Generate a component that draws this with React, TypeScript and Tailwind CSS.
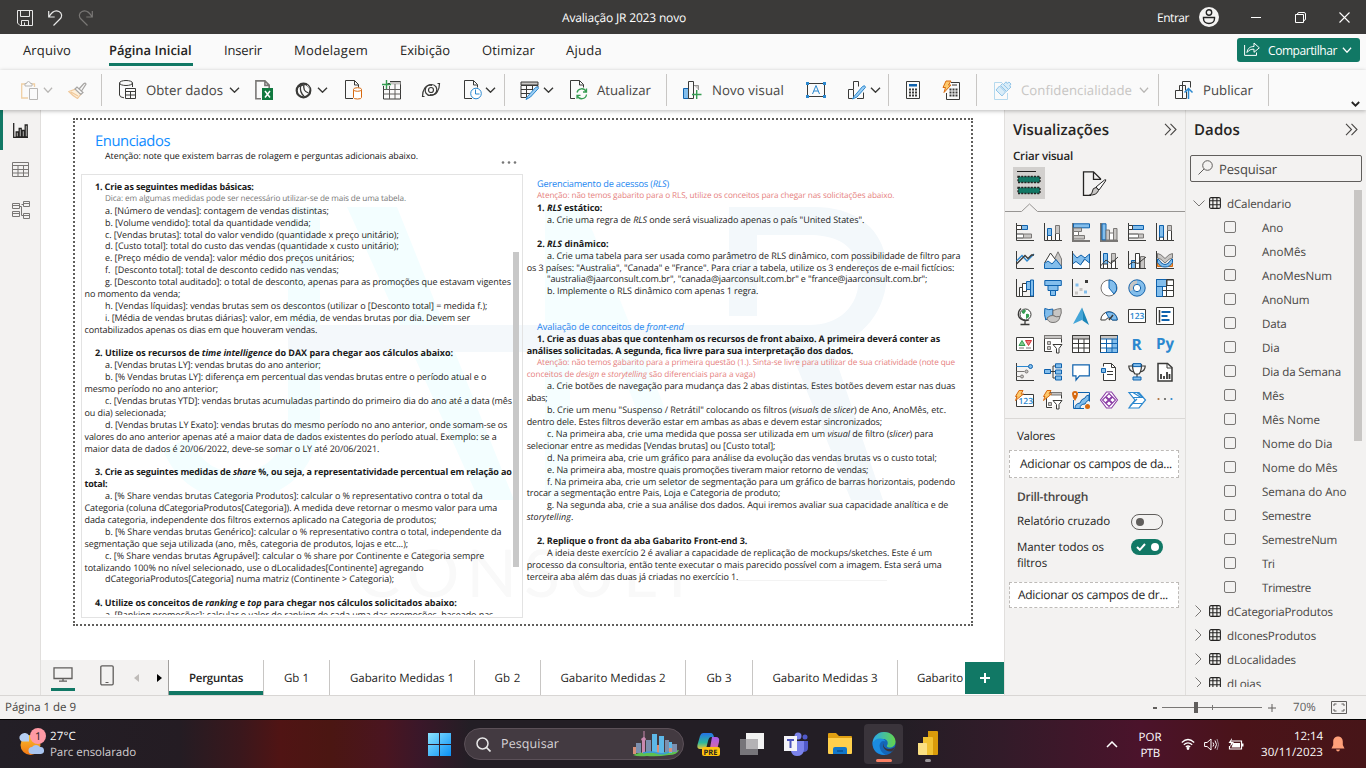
import React, { useLayoutEffect, useRef, useState } from 'react';

const DK = '#3a3a38';
const BL = '#0f62ad';
const LB = '#83beec';
const GY = '#797775';
const LG = '#c8c6c4';

/* Text whose letter spacing is adjusted so that it spans a given width. */
function Fit({ w, className = '', children }: { w: number; className?: string; children: React.ReactNode }) {
  const ref = useRef<HTMLSpanElement>(null);
  const [ls, setLs] = useState(0);
  useLayoutEffect(() => {
    const el = ref.current;
    if (!el) return;
    el.style.letterSpacing = '0px';
    const n = (el.textContent || '').length || 1;
    const next = (w - el.getBoundingClientRect().width) / n;
    setLs(next);
    el.style.letterSpacing = next + 'px';
  }, [w]);
  return (
    <span ref={ref} style={{ letterSpacing: ls + 'px' }} className={'inline-block shrink-0 whitespace-pre ' + className}>
      {children}
    </span>
  );
}

function I({ s = 18, h, v, className = '', children }: { s?: number; h?: number; v?: string; className?: string; children: React.ReactNode }) {
  return (
    <svg width={s} height={h ?? s} viewBox={v ?? `0 0 ${s} ${h ?? s}`} fill="none" stroke={DK} strokeWidth="1" className={'shrink-0 ' + className}>
      {children}
    </svg>
  );
}

const Chev = ({ className = '', c = '#3a3a38', s = 11 }: { className?: string; c?: string; s?: number }) => (
  <svg width={s} height="6" viewBox="0 0 11 6" fill="none" stroke={c} strokeWidth="1.4" preserveAspectRatio="none" className={'shrink-0 ' + className}>
    <path d="M1 .7 5.500 5.200 10 .7" />
  </svg>
);
const Sep = ({ className = '' }: { className?: string }) => <div className={'h-8 w-px shrink-0 bg-[#c8c6c4] ' + className} />;

function TitleBar() {
  return (
    <header className="flex h-[34px] shrink-0 items-center bg-[#3b3a39] text-[12px] text-white">
      <I s={16} className="ml-[17px] mt-[2px]"><g stroke="#e8e8e8" ><path d="M.5.5h15v15H3l-2.500-2.500zM3.500.5v6h9v-6M4.500 15.500v-5h7v5M7.500 12.500v3" /></g></I>
      <I s={15} h={16} className="ml-[15px] mt-[1px]"><path d="M.7 1v6h6M1 6.800C4 1.500 8 .2 11 1.500s3.500 5 1 7.500L5.500 15.500" stroke="#e8e8e8" strokeWidth="1.2" /></I>
      <I s={15} h={16} className="ml-[15px] mt-[1px]"><path d="M14.300 1v6h-6M14 6.800C11 1.500 7 .2 4 1.500s-3.500 5-1 7.500L9.500 15.500" stroke="#797775" strokeWidth="1.2" /></I>
      <Fit w={124} className="ml-[469px] mt-[2px]">Avaliação JR 2023 novo</Fit>
      <Fit w={32} className="ml-[471px] mt-[2px]">Entrar</Fit>
      <I s={20} className="ml-[10px]"><circle cx="10" cy="10" r="10" fill="#f3f2f1" stroke="none" /><circle cx="10" cy="5.500" r="2.700" stroke="#222" strokeWidth="1.400" /><path d="M4.500 10.500h11v1.200c0 3-2.500 4.800-5.500 4.800s-5.500-1.800-5.500-4.800z" stroke="#222" strokeWidth="1.400" /></I>
      <div className="ml-8 h-px w-[10px] bg-white" />
      <I s={11} className="ml-[34px] mt-[1px]"><path d="M.5 2.500h8v8h-8zM2.500 2.500V2Q2.500.5 4 .5h5Q10.500.5 10.500 2v5q0 1.500-2 1.500" stroke="#fff" /></I>
      <I s={11} className="ml-[33px] mt-[1px]"><path d="M.5.5l10 10M10.500.5l-10 10" stroke="#fff" strokeWidth="1.100" /></I>
    </header>
  );
}

function Menu() {
  return (
    <nav className="flex h-9 shrink-0 items-center bg-[#fafafa] text-[13px] text-[#252423]">
      <Fit w={48} className="ml-[23px] -mt-[2px]">Arquivo</Fit>
      <div className="ml-[38px] flex h-7 w-[84px] flex-col justify-between border-b-[3px] border-[#117865] pt-[2px] font-semibold leading-5"><Fit w={84}>Página Inicial</Fit></div>
      <Fit w={38} className="ml-[31px] -mt-[2px]">Inserir</Fit>
      <Fit w={74} className="ml-[32px] -mt-[2px]">Modelagem</Fit>
      <Fit w={50} className="ml-[32px] -mt-[2px]">Exibição</Fit>
      <Fit w={53} className="ml-[32px] -mt-[2px]">Otimizar</Fit>
      <Fit w={36} className="ml-[31px] -mt-[2px]">Ajuda</Fit>
      <button className="-mt-1 ml-[635px] flex h-6 w-[123px] items-center rounded-[3px] bg-[#117865] text-[12px] font-medium text-white">
        <I s={16} h={14} className="ml-[7px] -mt-[2px]"><path d="M.6 3v10.400h11.900V10.500M3 10.500C3.500 6 6.500 4.500 10 4.500V1l5.300 4.800L10 10.300V7.200C7 7 5 8 3 10.500z" stroke="#fff" /></I>
        <Fit w={69} className="ml-[8px] mt-[2px]">Compartilhar</Fit>
        <Chev c="#fff" s={10} className="ml-[5px]" />
      </button>
    </nav>
  );
}

function Ribbon() {
  return (
    <div className="relative z-10 flex h-10 shrink-0 items-center bg-[#fafafa] text-[13.200px] text-[#484644] shadow-[0_1px_4px_rgba(0,0,0,0.28)]">
      <I s={17} h={19} className="ml-[21px]"><path d="M7 17H.7V3h4M10 3h3.500v3" stroke="#f0cfa4" strokeWidth="1.300" /><path d="M4 5V2.500h1.500q.5-2 2-2t2 2H11V5z M8.500 7.500h8v11h-8z" stroke="#b8b6b4" fill="#fafafa" /></I>
      <Chev c="#b8b6b4" s={10} className="ml-[5px]" />
      <I s={19} h={17} className="ml-[15px]"><path d="M.8 9.500 8 7l5 5-3.500 4.500C7 15 4 13 .8 9.500zM3 10l7 4" stroke="#f0c89a" fill="#fdf0dc" strokeWidth="1.200" /><path d="M7 7l2-2 6 5.500-2.200 2zM11 7l4.500-5q2-2 2.500.2L13.500 9" stroke="#a8a6a4" fill="#fafafa" strokeWidth="1.200" /></I>
      <Sep className="ml-[14px]" />
      <I s={17} h={20} className="ml-[17px]"><ellipse cx="7" cy="3" rx="6.500" ry="2.500" /><path d="M.5 3v12q0 2.300 4.500 2.800M13.500 3v4M6.500 8.500h10v10h-10zM6.500 11.500h10M6.500 15h10M11.500 11.500v7" /></I>
      <Fit w={77} className="ml-[10px] mt-[2px]">Obter dados</Fit>
      <Chev className="ml-[6px]" />
      <I s={18} h={20} className="ml-[15px]"><path d="M6 18.800H.9V.9h9l4.300 4.300v3M9.900.9v4.500h4.300" stroke="#797775" strokeWidth="1.600" fill="#fafafa" /><path d="M7 8h11v12H7z" fill="#10793f" stroke="none" /><path d="M10 11l5 6.500M15 11l-5 6.500" stroke="#fff" strokeWidth="1.500" /></I>
      <I s={17} className="ml-[22px]"><circle cx="8.500" cy="8.500" r="6.800" strokeWidth="2.200" /><path d="M2.500 4.500c2 0 4-.5 5.500-1.500M5.500 4.500C5 8 6 11.500 9 14M9 2.500c-1 4 0 7 4.500 8.500" strokeWidth="1.300" /><path d="M12 3c1.500 1 2.500 3 2 5.500" stroke="#fafafa" strokeWidth=".7" /></I>
      <Chev className="ml-[5px]" />
      <I s={18} h={20} className="ml-[17px]"><path d="M8 18.500H.5V.5h9l4 4v3M9.500.5v4.500h4" /><g stroke="#d8690e"><path d="M8.500 9.500v8q0 1.500 4 1.500t4-1.500v-8" fill="#fff" /><ellipse cx="12.500" cy="9.500" rx="4" ry="1.800" fill="#fff" /></g></I>
      <I s={19} h={20} className="ml-[19px]"><path d="M5.500 3.500h13M1.500 6v13h17V1.500H8" /><path d="M8 2h10.500v2.500H8z" fill="#c8c6c4" stroke="none" /><path d="M1.500 9.500h17M1.500 14h17M7.500 6v13M13 4v15" stroke="#605e5c" /><path d="M0 4.500h9M4.500 0v9" stroke="#369d52" strokeWidth="1.400" /></I>
      <I s={20} h={16} className="ml-[20px]"><g strokeWidth="1.200"><path d="M16.500 1.500h2C18.500 8 15.500 13.500 9.500 13.500 5 13.500 3.500 9.500 4.500 6.500S8.500 2.500 11 3.500" /><path d="M3.500 14.500h-2C1.500 8 4.500 2.500 10.500 2.500c4.500 0 6 4 5 7s-4 4-6.500 3" /><circle cx="10" cy="8" r="2.500" /></g></I>
      <I s={18} h={20} className="ml-[23px]"><path d="M8 18.500H.5V.5h9l4 4v3M9.500.5v4.500h4" /><circle cx="12" cy="13.500" r="5.300" stroke="#2b88cf" fill="#fff" /><path d="M11.500 9.500v4.500h4" stroke="#2b88cf" /></I>
      <Chev className="ml-[3px]" />
      <Sep className="ml-[8px]" />
      <I s={20} h={19} className="ml-[15px] mt-[1px]"><path d="M1 1h17v3H1z" fill="#c8c6c4" /><path d="M6 16.500H1V4.500h17v2M1 8.500h12M1 12.500h9M6.500 4.500v12M12.500 4.500v5" /><path d="M7.500 15.500 15.500 6.500q2.500-2 3 .8L10.500 16 6 18.500z" fill="#9bcdf3" stroke="#2b88cf" /></I>
      <Chev className="ml-[3px]" />
      <I s={18} h={20} className="ml-[16px]"><path d="M5 18.500H.5V.5h9l4 4v3M9.500.5v4.500h4" /><path d="M16.500 8.500v3.500H13M16 11.500a4.800 4.800 0 0 0-9 1M7 18.800v-3.500h3.500M7.200 15.500a4.800 4.800 0 0 0 9.300-1" stroke="#369d52" strokeWidth="1.300" /></I>
      <Fit w={54} className="ml-[9px] mt-[2px]">Atualizar</Fit>
      <Sep className="ml-[15px]" />
      <I s={19} h={20} className="ml-[16px]"><path d="M.5 8.500h5v10h-5z" fill={LB} stroke={BL} /><path d="M5.500 1.500h5v17h-5z" /><path d="M11 5.500h4.500V10" fill="#c8c6c4" stroke="#979593" /><path d="M9 14.500h9.500M13.700 10v9" stroke="#369d52" strokeWidth="1.400" /></I>
      <Fit w={72} className="ml-[10px] mt-[2px]">Novo visual</Fit>
      <I s={20} h={16} className="ml-[22px]"><path d="M1.500 1.500h17v13h-17z" /><path d="M0 0h3v3H0zM17 0h3v3h-3zM0 13h3v3H0zM17 13h3v3h-3z" fill="#2b88cf" stroke="none" /><path d="M6.500 12 10 3.500 13.500 12M7.800 9h4.400" stroke="#2b88cf" /></I>
      <I s={19} h={20} className="ml-[22px]"><path d="M5.500 18.500H.5v-9h5zM5.500 9V1.500h5v5M15.500 9V7.500M9 18.500h6.500v-6" /><path d="M6 16.500 14.500 6.500q2.500-2 3 .8L9 17 4.500 19z" fill="#9bcdf3" stroke="#2b88cf" /></I>
      <Chev className="ml-[3px]" />
      <Sep className="ml-[7px]" />
      <I s={14} h={18} className="ml-[17px]"><path d="M.5.5h13v17H.5z" /><path d="M3 3h8v2.500H3z" fill="#0f62ad" stroke="none" /><path d="M3 8.500h8M3 11.500h8M3 14.500h8" strokeWidth="2" strokeDasharray="2 1" /></I>
      <I s={18} h={20} className="ml-[22px]"><path d="M9 2.500h8.500v17h-13V13" /><path d="M10 5h5" stroke="#979593" strokeWidth="2" /><path d="M7.500 9.500h8M7.500 12.500h8M7.500 15.500h8" strokeWidth="2" strokeDasharray="2 1" /><path d="M4 1h5L6.500 5H9L2 12.500l1.500-5H1z" fill="#fdc96d" stroke="#d8690e" /></I>
      <Sep className="ml-[16px]" />
      <I s={18} h={19} className="ml-[17px]"><path d="M8 1.500H.5v17h13V12" stroke="#b5d9ee" /><g stroke="#92c5e8" fill="#d8ecf8"><path d="M2 9l3.500-4 6 6-3.500 4zM6.500 4.500l2-2 6 6-2 2z" /><path d="M9.500 3.500 12 .8l1 1.700 2-1.500 2 2-1.500 2 1.500 1-2.500 2.500z" /></g></I>
      <Fit w={111} className="ml-[9px] mt-[2px] text-[#c8c6c4]">Confidencialidade</Fit>
      <Chev c="#b8b6b4" s={10} className="ml-[7px]" />
      <Sep className="ml-[9px]" />
      <I s={19} h={20} className="ml-[16px]"><path d="M.5 10.500h7v8h-7zM7.500 14V1.500h8v6M4.500 10V5.500h6v5" /><path d="M7.500 18.500h4v-7" /><path d="M13.500 19V9M9.500 12.500l4-4 4 4" stroke="#2b88cf" strokeWidth="1.500" /></I>
      <Fit w={50} className="ml-[9px] mt-[2px]">Publicar</Fit>
      <Sep className="ml-[15px]" />
      <svg width="9" height="6" viewBox="0 0 9 6" fill="none" stroke="#252423" strokeWidth="1.800" className="ml-[82px] mt-[27px] shrink-0"><path d="m.8 1 3.700 3.700L8.200 1" /></svg>
    </div>
  );
}

function NavRail() {
  return (
    <aside className="flex w-[41px] shrink-0 flex-col border-r border-[#e1dfdd] bg-[#f3f2f1]">
      <div className="flex h-10 items-center border-l-[3px] border-[#117865] pl-[10px]">
        <I s={15}><g stroke="#252423" strokeWidth="1.300"><path d="M.7 0v14.300H15M3.200 9h2v5h-2zM6.200 5.500h2v8.500h-2zM9.200 7.500h2V14h-2zM12.200 2h2v12h-2z" /></g></I>
      </div>
      <div className="flex h-10 items-center pb-[2px] pl-3">
        <I s={17}><g stroke="#797775"><path d="M.5 1.500h16v14H.5zM.5 4.500h16M.5 8.500h16M.5 12h16M6 4.500v11M11.500 4.500v11" /></g></I>
      </div>
      <div className="flex h-10 items-center pl-3">
        <I s={18}><g stroke="#797775"><path d="M.5 2.500h7v5h-7zM.5 10.500h7v5h-7zM11.500.5h6v5h-6zM11.500 12.500h6v5h-6zM.5 4.500h7M.5 12.500h7M11.500 2.500h6M11.500 14.500h6M7.500 5.500h2v9h2M9.500 3.500h2" /></g></I>
      </div>
    </aside>
  );
}

type Line = [number, number, React.ReactNode, string?] | null;
const B = 'font-bold text-[#1a1a1a]';
const X = 'text-[#1f1e1d]';
const R = 'text-[8.200px] text-[#e67f80]';
const H = 'text-[9.200px] text-[#2286f0]';

const left: Line[] = [
  [95, 253.7, '1. Crie as seguintes medidas básicas:', B],
  [105, 406, 'Dica: em algumas medidas pode ser necessário utilizar-se de mais de uma tabela.', 'text-[8.200px] text-[#777]'],
  [105, 328.7, 'a. [Número de vendas]: contagem de vendas distintas;'],
  [105, 310.7, 'b. [Volume vendido]: total da quantidade vendida;'],
  [105, 398.7, 'c. [Vendas brutas]: total do valor vendido (quantidade x preço unitário);'],
  [105, 398.7, 'd. [Custo total]: total do custo das vendas (quantidade x custo unitário);'],
  [105, 354.3, 'e. [Preço médio de venda]: valor médio dos preços unitários;'],
  [105, 338.7, 'f.  [Desconto total]: total de desconto cedido nas vendas;'],
  [105, 511, 'g. [Desconto total auditado]: o total de desconto, apenas para as promoções que estavam vigentes'],
  [84.500, 180.300, 'no momento da venda;'],
  [105, 487.300, 'h. [Vendas líquidas]: vendas brutas sem os descontos (utilizar o [Desconto total] = medida f.);'],
  [105, 470, 'i. [Média de vendas brutas diárias]: valor, em média, de vendas brutas por dia. Devem ser'],
  [84.500, 317.300, 'contabilizados apenas os dias em que houveram vendas.'],
  null,
  [95, 453, <>2. Utilize os recursos de <em>time intelligence</em> do DAX para chegar aos cálculos abaixo:</>, B],
  [105, 320.700, 'a. [Vendas brutas LY]: vendas brutas do ano anterior;'],
  [105, 486.300, 'b. [% Vendas brutas LY]: diferença em percentual das vendas brutas entre o período atual e o'],
  [84.500, 218, 'mesmo período no ano anterior;'],
  [105, 512, 'c. [Vendas brutas YTD]: vendas brutas acumuladas partindo do primeiro dia do ano até a data (mês'],
  [84.500, 166, 'ou dia) selecionada;'],
  [105, 507.300, 'd. [Vendas brutas LY Exato]: vendas brutas do mesmo período no ano anterior, onde somam-se os'],
  [84.500, 496.700, 'valores do ano anterior apenas até a maior data de dados existentes do período atual. Exemplo: se a'],
  [84.500, 379.300, 'maior data de dados é 20/06/2022, deve-se somar o LY até 20/06/2021.'],
  null,
  [95, 511.700, <>3. Crie as seguintes medidas de <em>share</em> %, ou seja, a representatividade percentual em relação ao</>, B],
  [84.500, 107.500, 'total:', B],
  [105, 482.700, 'a. [% Share vendas brutas Categoria Produtos]: calcular o % representativo contra o total da'],
  [84.500, 497.300, 'Categoria (coluna dCategoriaProdutos[Categoria]). A medida deve retornar o mesmo valor para uma'],
  [84.500, 436.300, 'dada categoria, independente dos filtros externos aplicado na Categoria de produtos;'],
  [105, 501.300, 'b. [% Share vendas brutas Genérico]: calcular o % representativo contra o total, independente da'],
  [84.500, 408, 'segmentação que seja utilizada (ano, mês, categoria de produtos, lojas e etc...);'],
  [105, 484.300, 'c. [% Share vendas brutas Agrupável]: calcular o % share por Continente e Categoria sempre'],
  [84.500, 423.700, 'totalizando 100% no nível selecionado, use o dLocalidades[Continente] agregando'],
  [105, 394, 'dCategoriaProdutos[Categoria] numa matriz (Continente > Categoria);'],
  null,
  [95, 456.700, <>4. Utilize os conceitos de <em>ranking</em> e <em>top</em> para chegar nos cálculos solicitados abaixo:</>, B],
  [105, 493.300, 'a. [Ranking promoções]: calcular o valor do ranking de cada uma das promoções, baseado nas'],
];

const right: Line[] = [
  [537, 669, <>Gerenciamento de acessos (<em>RLS</em>)</>, H],
  [537, 894.300, 'Atenção: não temos gabarito para o RLS, utilize os conceitos para chegar nas solicitações abaixo.', R],
  [537, 602.300, <>1. <em>RLS</em> estático:</>, B],
  [547, 864.300, <>a. Crie uma regra de <em>RLS</em> onde será visualizado apenas o país "United States".</>],
  null,
  [537, 608.700, <>2. <em>RLS</em> dinâmico:</>, B],
  [547, 960.300, 'a. Crie uma tabela para ser usada como parâmetro de RLS dinâmico, com possibilidade de filtro para'],
  [526.700, 954.300, 'os 3 países: "Australia", "Canada" e "France". Para criar a tabela, utilize os 3 endereços de e-mail fictícios:'],
  [547, 927.300, '"australia@jaarconsult.com.br", "canada@jaarconsult.com.br" e "france@jaarconsult.com.br";'],
  [547, 758.300, 'b. Implemente o RLS dinâmico com apenas 1 regra.'],
  null,
  null,
  [537, 683.700, <>Avaliação de conceitos de <em>front-end</em></>, H],
  [537, 940, '1. Crie as duas abas que contenham os recursos de front abaixo. A primeira deverá conter as', B],
  [526.700, 853.300, 'análises solicitadas. A segunda, fica livre para sua interpretação dos dados.', B],
  [537, 955, 'Atenção: não temos gabarito para a primeira questão (1.). Sinta-se livre para utilizar de sua criatividade (note que', R],
  [526.700, 755.300, <>conceitos de <em>design</em> e <em>storytelling</em> são diferenciais para a vaga)</>, R],
  [547, 955.300, 'a. Crie botões de navegação para mudança das 2 abas distintas. Estes botões devem estar nas duas'],
  [526.700, 547.300, 'abas;'],
  [547, 946, <>b. Crie um menu "Suspenso / Retrátil" colocando os filtros (<em>visuals</em> de <em>slicer</em>) de Ano, AnoMês, etc.</>],
  [526.700, 882, 'dentro dele. Estes filtros deverão estar em ambas as abas e devem estar sincronizados;'],
  [547, 933.300, <>c. Na primeira aba, crie uma medida que possa ser utilizada em um <em>visual</em> de filtro (<em>slicer</em>) para</>],
  [526.700, 775.300, 'selecionar entre as medidas [Vendas brutas] ou [Custo total];'],
  [547, 936.700, 'd. Na primeira aba, crie um gráfico para análise da evolução das vendas brutas vs o custo total;'],
  [547, 868.300, 'e. Na primeira aba, mostre quais promoções tiveram maior retorno de vendas;'],
  [547, 955, 'f. Na primeira aba, crie um seletor de segmentação para um gráfico de barras horizontais, podendo'],
  [526.700, 780.300, 'trocar a segmentação entre Pais, Loja e Categoria de produto;'],
  [547, 948.300, 'g. Na segunda aba, crie a sua análise dos dados. Aqui iremos avaliar sua capacidade analítica e de'],
  [526.700, 573.300, <><em>storytelling</em>.</>],
  null,
  [537, 747.300, '2. Replique o front da aba Gabarito Front-end 3.', B],
  [547, 932, 'A ideia deste exercício 2 é avaliar a capacidade de replicação de mockups/sketches. Este é um'],
  [526.700, 941.700, 'processo da consultoria, então tente executar o mais parecido possível com a imagem. Esta será uma'],
  [526.700, 738.300, 'terceira aba além das duas já criadas no exercício 1.'],
];

function Lines({ lines, x0 }: { lines: Line[]; x0: number }) {
  return (
    <>
      {lines.map((l, i) => (
        <div key={i} className="flex h-[11.900px] shrink-0 items-center leading-[11.900px]" style={l ? { paddingLeft: l[0] - x0 } : undefined}>
          {l && <Fit w={l[1] - l[0]} className={l[3] ?? X}>{l[2]}</Fit>}
        </div>
      ))}
    </>
  );
}

function Canvas() {
  return (
    <div className="flex h-[550px] pt-2 pl-8">
      <div className="relative h-[508px] w-[900px] shrink-0 border-2 border-dotted border-[#605e5c]">
        <div className="absolute inset-0">
          <svg width="896" height="504" viewBox="75 120 896 504" className="absolute inset-0">
            <path d="M288 207h32v208c0 60-42 85-82 85-35 0-62-18-75-50l26-12c12 24 26 34 48 34 30 0 51-20 51-57z" fill="#f3feff" />
            <path d="M347 207h50l117 293h-35z" fill="#f3feff" />
            <path d="M545 207h38l47 118h-85zM545 352h25v148h-25zM615 352h28l57 148h-30z" fill="#f5feff" />
            <path d="M288 325h565c-10 18-22 25-40 27H288z" fill="#f4f8fb" />
            <path d="M729 207h85c45 0 73 25 73 65 0 40-25 66-55 76l51 152h-32l-60-148h-62v-27h80c30 0 50-18 50-48s-20-42-50-42h-52v81h-28z" fill="#f3f8fb" />
            <path d="M738 580.500h149" stroke="#f3f3f3" />
          </svg>
          <div className="absolute left-[281px] top-[413px] whitespace-nowrap font-[Lato] text-[66px] leading-[80px] text-[#f9f9f9]"><Fit w={348}>CONSULT</Fit></div>
        </div>
        <div className="relative flex h-full flex-col">
          <div className="ml-5 mt-[10px] h-[22px] text-[14.800px] leading-[22px] text-[#118dff]"><Fit w={75}>Enunciados</Fit></div>
          <div className="flex h-[22px] items-start">
            <Fit w={313} className="ml-[30px] text-[8.900px] leading-[8px] text-[#111]">Atenção: note que existem barras de rolagem e perguntas adicionais abaixo.</Fit>
            <I s={16} h={3} className="ml-[83px] mt-[9px]"><g fill="#777" stroke="none"><circle cx="2" cy="1.500" r="1.300" /><circle cx="8" cy="1.500" r="1.300" /><circle cx="14" cy="1.500" r="1.300" /></g></I>
          </div>
          <div className="flex text-[9px]">
            <div className="ml-[6px] h-[444px] w-[442px] shrink-0 border border-[#e3e3e3]">
              <div className="flex h-[440px] overflow-hidden">
                <div className="w-[431px] shrink-0 pt-[6px]"><Lines lines={left} x0={82} /></div>
                <div className="mt-[77px] h-[315px] w-[6px] bg-[#c8c8c8]" />
              </div>
            </div>
            <div className="pt-[4.300px]"><Lines lines={right} x0={523} /></div>
          </div>
        </div>
      </div>
    </div>
  );
}

function PageTabs() {
  const tabs: [string, number, number][] = [['Gb 1', 66, 25], ['Gabarito Medidas 1', 145, 104], ['Gb 2', 66, 26], ['Gabarito Medidas 2', 145, 105], ['Gb 3', 67, 25], ['Gabarito Medidas 3', 145, 105]];
  return (
    <div className="flex h-[35px] shrink-0 bg-white text-[11.500px] text-[#252423]">
      <div className="flex w-[128px] shrink-0 items-start border-r border-[#a19f9d] bg-[#f3f2f1]">
        <div className="ml-[10px] flex h-[31px] w-6 flex-col items-center justify-between border-b-[3px] border-[#117865] pt-[7px]">
          <I s={20} h={15} className="-ml-px"><path d="M1 .8h18v10.700H1zM10 12v2M6 14.200h8" stroke="#605e5c" strokeWidth="1.300" /></I>
        </div>
        <I s={14} h={21} className="ml-[25px] mt-[5px]"><rect x=".8" y=".8" width="12.400" height="19" rx="1.200" stroke="#605e5c" strokeWidth="1.300" /><path d="M5.500 17.500h3" stroke="#605e5c" /></I>
        <I s={5} h={8} className="ml-[20px] mt-[14px]"><path d="M5 0v8L0 4z" fill="#bebbb8" stroke="none" /></I>
        <I s={5} h={8} className="ml-[18px] mt-[14px]"><path d="M0 0v8l5-4z" fill="#000" stroke="none" /></I>
      </div>
      <div className="flex w-[94px] shrink-0 items-center justify-center border-b-4 border-[#117865] pt-[6px] font-semibold"><Fit w={54}>Perguntas</Fit></div>
      {tabs.map(([t, w, tw]) => (
        <div key={t} className="flex shrink-0 items-center justify-center border-l border-[#c8c6c4] pt-[2px]" style={{ width: w }}><Fit w={tw}>{t}</Fit></div>
      ))}
      <div className="flex w-[68px] shrink-0 items-center border-l border-[#c8c6c4] pl-[19px] pt-[2px]"><Fit w={46}>Gabarito</Fit></div>
      <div className="mt-[2px] flex h-8 w-[39px] shrink-0 items-center justify-center bg-[#117865]">
        <I s={10}><path d="M5 0v10M0 5h10" stroke="#fff" strokeWidth="2" /></I>
      </div>
    </div>
  );
}

const ax = <path d="M.5 0v17.500H18" />;
const icons: React.ReactNode[] = [
  <>{ax}<path d="M.5 6.500h5M.5 12h10" /><path d="M5.500 2.500h6v4h-6z" fill={LB} stroke={BL} /><path d="M.5 2.500h5v4h-5zM.5 11h7v4h-7z" fill="#fff" /><path d="M7.500 11h8v4h-8z" fill={LG} stroke={GY} /></>,
  <>{ax}<path d="M3.500 12.500h4v5h-4zM11.500 10.500h4v7h-4z" fill="#fff" /><path d="M3.500 5.500h4v7h-4z" fill={LB} stroke={BL} /><path d="M11.500 2.500h4v8h-4z" fill={LG} stroke={GY} /></>,
  <><path d="M1 0v18h17" strokeWidth="2" stroke={GY} /><path d="M1.500.8h16v4h-16z" fill={LB} stroke={BL} /><path d="M1.500 5h8v3.500h-8zM1.500 12.500h11V16h-11z" fill={LG} stroke={GY} /><path d="M1.500 8.500h5v4h-5z" fill="#fff" stroke={GY} /></>,
  <><path d="M1 0v18h17" strokeWidth="2" stroke={GY} /><path d="M2 .8h4v16H2z" fill={LB} stroke={BL} /><path d="M6 7h3.500v10H6zM13.500 5.500H17V17h-3.500z" fill={LG} stroke={GY} /><path d="M9.500 10h4v7h-4z" fill="#fff" stroke={GY} /></>,
  <>{ax}<path d="M.5 2.500h15v4H.5z" fill={LB} stroke={BL} /><path d="M.5 2.500h4v4h-4zM.5 11h10v4H.5z" fill="#fff" /><path d="M10.500 11h5v4h-5z" fill={LG} stroke={GY} /></>,
  <>{ax}<path d="M3.500 14h4v3.500h-4zM11.500 7.500h4v10h-4z" fill="#fff" /><path d="M3.500 2.500h4V14h-4z" fill={LB} stroke={BL} /><path d="M11.500 2.500h4v5h-4z" fill={LG} stroke={GY} /></>,
  <>{ax}<path d="M.5 10 6 4.500l5 5.500 7-7" stroke="#2b88cf" strokeWidth="1.300" /><path d="M.5 13 9 4.500l3 3L15.500 4H18" strokeWidth="1.300" /></>,
  <><path d="M10 9 14 .8 17.500 8v9z" fill={LG} stroke={GY} /><path d="M.5 12 6.500 2l6 8" fill="#fff" stroke={DK} /><path d="M.5 17.500v-5L4 10l4 3 4-4.500 5.500 7v2z" fill={LB} stroke={BL} /></>,
  <><path d="M.5 17.500h17v-6L14 7l-5 6-4-4-4.500 3z" fill="#fff" stroke={GY} /><path d="M.5 2 5 7l4-3 4 3 4.500-4v9l-5-4-4 6L4 10.500.5 13z" fill={LB} stroke={BL} />{ax}</>,
  <><path d="M3.500 2.500h4v15h-4z" fill={LB} stroke={BL} /><path d="M11.500 2.500h4v15h-4z" fill={LG} stroke={GY} /><path d="M3.500 13h4v4.500h-4zM11.500 10h4v7.500h-4z" fill="#fff" />{ax}<path d="M.5 15 6 9l5 3.500L18 6" /></>,
  <><path d="M3.500 9.500h4v8h-4z" fill={LB} stroke={BL} /><path d="M7.500 2.500h4v15h-4z" fill="#fff" /><path d="M12.500 5.500h4v12h-4z" fill={LG} stroke={GY} />{ax}<path d="M.5 14 5 11l5 1.500L18 6" /></>,
  <>{ax}<path d="M1.500 11.500h4v4h-4zM12.500 11.500h4v4h-4z" fill="#f6a04a" stroke="#d8690e" /><path d="M1.500 2.500q3 0 7.500 5 4.500-5 7.500-5V7q-3 0-7.500 5Q4.500 7 1.500 7z" fill={LG} stroke={GY} /><path d="M1.500 8q2 .5 3.500 3.500 4 4 8 0Q14.500 8.500 16.500 8v3.500Q14 16 9 16t-7.500-4.500z" fill={LB} stroke={BL} /></>,
  <>{ax}<path d="M3.500 8.500h3v9h-3zM6.500 4.500h4v8h-4z" fill="#fff" /><path d="M10.500 2.500h4v8h-4zM14.500 1h3v16h-3z" fill={LB} stroke={BL} /></>,
  <><path d="M.8 1.500h16.500v5H.8z" fill={LB} stroke={BL} /><path d="M4 6.500h10v5H4z" fill={LB} stroke={BL} /><path d="M6.500 11.500h5v5h-5z" fill={LB} stroke={BL} /></>,
  <>{ax}<g stroke="none"><path d="M3.500 4.500h3v3h-3zM12 11.500h3v3h-3z" fill={LB} /><path d="M7.500 9h3v3h-3zM3 12.500h3v3H3z" fill={LG} /><path d="M13 1h3v3h-3z" fill={DK} /></g></>,
  <><circle cx="9" cy="9" r="8" fill="#fff" stroke={GY} /><path d="M9 1a8 8 0 0 1 5 14L9 9z" fill={LB} stroke={BL} /></>,
  <><circle cx="9" cy="9" r="6" stroke={LG} strokeWidth="4" /><path d="M9 3a6 6 0 1 1-5.500 8.500" stroke={LB} strokeWidth="4" /><circle cx="9" cy="9" r="8.200" stroke={BL} /><circle cx="9" cy="9" r="3.700" stroke={BL} fill="#fff" /></>,
  <><path d="M.5.500h17v17H.5z" fill="#fff" /><path d="M.5.500h10v7H.5zM.5 7.500h6v10h-6z" fill={LB} stroke={BL} /><path d="M10.500.5v17M6.500 11.500h11" /><path d="M11 1h6.500v5.500H11z" fill="#fff" /></>,
  <><circle cx="9.500" cy="7.500" r="5.500" fill="#fff" /><path d="M6 4q3-3 4 0l-2 3q-3-1-2-3zM10 7q4-1 3 3l-3 2z" fill="#369d52" stroke="none" /><path d="M5 1.500Q1 5 3 10q4 5 10 3M9 14v3M4.500 17.500h9" strokeWidth="1.300" /></>,
  <><path d="M.8 1.500q4 2 8 .5v6q-4 2-7 5-2-5-1-11.500z" fill={LB} stroke={BL} /><path d="M9 3.500q5-2 8-2 1 5-1 8-4 1-7-1z" fill={LG} stroke={GY} /><path d="M3 11q3-3 6-2.500 3 2 7 1-1 6-7 6-5 0-6-4.500z" fill={LG} stroke={GY} /></>,
  <><path d="M10 .5 17 18l-6.500-4.500z" fill="#1b86b8" stroke="none" /><path d="M10 .5 1 17l10-4.500z" fill="#43a5d8" stroke="none" /></>,
  <><path d="M.8 13a8.200 8.200 0 0 1 16.400 0h-5a3.500 3.500 0 0 0-6.500 0z" fill="#fff" stroke={DK} /><path d="M6 5.500A8.200 8.200 0 0 1 17.200 13h-5q-1-2.500-3.500-2.500z" fill={LB} stroke={BL} /><path d="m9 13 4-5" strokeWidth="1.500" /></>,
  <><path d="M.5 2.500h17v13H.5z" fill="#fff" /><text x="1.800" y="12" fontSize="8.500" fontWeight="600" fill="#2b88cf" stroke="none" fontFamily="Open Sans">123</text></>,
  <><path d="M.5.500h17v17H.5z" fill="#fff" /><path d="M3.500 3v12.500" strokeWidth="1.500" /><path d="M5.500 5h9M5.500 9h6M5.500 13h8" stroke={BL} strokeWidth="1.800" /></>,
  <><path d="M.5 2.500h17v13H.5z" fill="#fff" /><path d="m3 10.500 3-5 3 5z" fill="#7fc98e" stroke="#369d52" /><path d="m9.500 5.500h6l-3 5z" fill="#f08080" stroke="#d13438" /><path d="M3 13h5M10 13h5" stroke={GY} /></>,
  <><path d="M8 16.500H.5V.500h17v7" fill="#fff" /><path d="M.5.500h17v3H.5z" fill={LG} stroke={GY} /><path d="M3.500 6.500h3v3h-3zM3.500 11.500h3v3h-3z" fill={LG} stroke={GY} /><path d="M9 9.500h9l-3 4v4.500h-2.500v-4.500z" fill="#fff" /></>,
  <><path d="M.5.500h17v17H.5z" fill="#fff" /><path d="M1 1h16v3H1z" fill={LG} stroke="none" /><path d="M.5.500h17v17H.5zM.5 4h17M.5 8.500h17M.5 13h17M6.500 4v13.500M12 4v13.500" /></>,
  <><path d="M.5.500h17v17H.5z" fill="#fff" /><path d="M1 1h16v3H1z" fill={LG} stroke="none" /><path d="M12 4h5.500v13.500H6.500V13H12z" fill={LB} stroke="none" /><path d="M.5.500h17v17H.5zM.5 4h17M.5 8.500h17M.5 13h17M6.500 4v13.500M12 4v13.500" stroke={BL} /><path d="M.5 17V.5h17" /></>,
  <text x="3.500" y="15" fontSize="15.500" fontWeight="700" fill="#2b88cf" stroke="none" fontFamily="Open Sans">R</text>,
  <text x="0" y="14" fontSize="15.500" fontWeight="700" fill="#2b88cf" stroke="none" fontFamily="Open Sans" textLength="18" lengthAdjust="spacingAndGlyphs">Py</text>,
  <>{ax}<path d="M.5 3.500h12" stroke="#2b88cf" /><circle cx="14.500" cy="3.500" r="2" fill={LB} stroke={BL} /><path d="M.5 8.500h8M.5 13.500h4" stroke={GY} /><circle cx="10.500" cy="8.500" r="1.500" fill={LG} stroke={GY} /><circle cx="6" cy="13.500" r="1.500" fill={LG} stroke={GY} /></>,
  <><path d="M6 8.500h6M9 3v12M9 3h3M9 15h3" /><path d="M.5 6.500h6v4h-6zM11.500.800h6v4h-6zM11.500 7h6v4h-6zM11.500 13h6v4h-6z" fill={LB} stroke={BL} /></>,
  <path d="M.8 1.800h16.500v11H7.500L4 17v-4.200H.800z" fill="#fff" stroke={BL} strokeWidth="1.200" />,
  <><path d="M3.500 3.500V.5h8l4 4v13h-12v-7" fill="#fff" /><path d="M11.500.5v4h4M7 8.500h6M7 11.500h6" /><path d="M1.500 5.500h4v4h-4z" fill={LB} stroke={BL} /></>,
  <><path d="M4.500 1.500h9q0 7-2.500 9.500H7Q4.500 8 4.500 1.500z" fill="#fff" strokeWidth="1.200" /><path d="M4.500 3H.8q0 5 5 6M13.500 3h3.700q0 5-5 6M9 11v3" strokeWidth="1.200" /><path d="M5 .6h8v3H5zM5 14h8v3H5z" fill={LB} stroke={BL} /></>,
  <><path d="M2 .5h9.500l4.500 4V18H2z" fill="#fff" strokeWidth="1.500" /><path d="M11 .5V5h5" /><path d="M5 11v5M8 13v3M11 9v7M13.500 11v5" strokeWidth="1.800" /></>,
  <><path d="M.5 3.500h17v12H.5z" fill="#fff" /><text x="2.500" y="13" fontSize="8.500" fontWeight="600" fill="#2b88cf" stroke="none" fontFamily="Open Sans">123</text><path d="M3-.5h4L5 3h2.500L-.5 9.500l1.500-4h-1.500z" fill="#fdc96d" stroke="#d8690e" /></>,
  <><path d="M8 16.500H2.500V1.500h15v6" fill="#fff" /><path d="M7 1.500h10.500v2.500H7z" fill={LG} stroke={GY} /><path d="M4.500 11.500h3v3h-3z" fill={LG} stroke={GY} /><path d="M9 9.500h9l-3 4v4.500h-2.500v-4.500z" fill="#fff" /><path d="M3-.5h4L5 3h2.500L-.5 9.500l1.500-4h-1.500z" fill="#fdc96d" stroke="#d8690e" /></>,
  <><path d="M6 1.500h11.500v9M1.500 9v8.500H12" stroke="#0f62ad" /><path d="M3 17.500q0-5 5-5.500 1-4 5-5 1-3 4-3v5q-3 1-4 4-5 0-5 4.500z" fill={LB} stroke={BL} /><path d="M3 10Q0 6 0 3t3-3 3 3-3 7z" fill="#d8690e" stroke="none" /><circle cx="3" cy="3" r="1" fill="#fff" stroke="none" /><circle cx="15.500" cy="15.500" r="2.500" fill="#d8690e" stroke="none" /></>,
  <g stroke="#8b3da5" strokeWidth="1.100"><path d="M6.500 1h5L17.500 9l-6 8h-5L.5 9z" fill="#fff" /><path d="m9 2.500 3 3-3 3-3-3zM5.500 6l3 3-3 3-3-3zM12.500 6l3 3-3 3-3-3zM9 9.500l3 3-3 3-3-3z" /></g>,
  <g stroke="#2b88cf" strokeWidth="1.200"><path d="M1 1.500h10l6.500 7.500-6.500 8H1l6-8z" fill="#fff" /><path d="m5 1.500 8 5M9 1.500l6 5M5 6.500h10M4 12.500h10M2 15l7-7" /></g>,
  <g fill="#b0703a" stroke="none"><circle cx="2.500" cy="8" r="1.100" /><circle cx="9" cy="8" r="1.100" fill="#605e5c" /><circle cx="15.500" cy="8" r="1.100" fill="#2b88cf" /></g>,
];

const Collapse = () => <I s={13} h={13} className="-mt-px"><path d="M1 .8l5.500 5.700L1 12.200M6.500.8 12 6.500 6.500 12.200" stroke="#484644" strokeWidth="1.100" /></I>;

function VisualPane() {
  return (
    <section className="flex w-[181px] shrink-0 flex-col border-l border-[#e1dfdd] bg-[#f3f2f1] text-[11.500px] text-[#252423]">
      <div className="mt-[8px] flex h-6 items-center justify-between pl-2 pr-[8px] text-[15px] font-semibold"><Fit w={96}>Visualizações</Fit><Collapse /></div>
      <div className="flex h-[25px] items-center pl-2 pt-1 font-semibold"><Fit w={60}>Criar visual</Fit></div>
      <div className="flex h-8 items-center gap-[37px] pl-2">
        <div className="flex h-8 w-8 items-center justify-center bg-[#d2d0ce]">
          <I s={24}><path d="M0 .5h19" stroke="#252423" /><path d="M1 5.500h22v6H1zM1 16.500h22v6H1z" fill="#117865" stroke="#252423" strokeDasharray="2 1.200" strokeWidth="1.300" /></I>
        </div>
        <I s={25}><path d="M9 24.500H1.500V.800h10l7 7V9M11.500.8v7.500h6.500" stroke="#252423" strokeWidth="1.300" /><path d="M14 16 22.500 9q2-1 1 1L17 19z" fill="#fff" stroke="#252423" /><path d="M14 16.500q2 .5 2.500 3-2 5-9 4.500 3-1 3-4t3.500-3.500z" fill="#c8c6c4" stroke="#252423" /></I>
      </div>
      <I s={180} h={13}><path d="M0 12.500h16.500l8-7.500 8 7.500H180" stroke="#979593" /></I>
      <div className="grid grid-cols-[repeat(6,28px)] grid-rows-[repeat(7,28px)] pl-[11px] pt-[11px]">
        {icons.map((ic, i) => <I key={i} s={18} className="overflow-visible">{ic}</I>)}
      </div>
      <div className="-mt-[1px] h-px shrink-0 bg-[#dad8d6]" />
      <div className="mt-[7px] flex h-[21px] items-center pl-3"><Fit w={38}>Valores</Fit></div>
      <div className="ml-1 mt-[3px] flex h-7 w-[170px] items-center border border-dashed border-[#bebbb8] bg-white pl-[10px] text-[12px]"><Fit w={152}>Adicionar os campos de da...</Fit></div>
      <div className="mt-[8px] flex h-[21px] items-center pl-3 font-semibold text-[12px] text-[#484644]"><Fit w={71}>Drill-through</Fit></div>
      <div className="mt-[4px] flex h-[21px] items-center pl-3">
        <Fit w={93}>Relatório cruzado</Fit>
        <div className="ml-[21px] flex h-4 w-8 items-center rounded-full border border-[#605e5c] pl-1"><div className="h-2 w-2 rounded-full bg-[#605e5c]" /></div>
      </div>
      <div className="mt-[7px] flex h-8 pl-3">
        <div className="flex w-[114px] flex-col pt-px leading-4"><Fit w={87} className="self-start">Manter todos os</Fit><Fit w={30} className="self-start">filtros</Fit></div>
        <div className="flex h-4 w-8 items-center justify-between rounded-full bg-[#117865] pl-[5px] pr-1">
          <I s={10} h={8}><path d="m1 4 2.800 2.800L9 1" stroke="#fff" strokeWidth="2" /></I><div className="h-2 w-2 rounded-full bg-white" />
        </div>
      </div>
      <div className="ml-1 mt-[11px] flex h-[26px] w-[170px] items-center border border-dashed border-[#bebbb8] bg-white pl-2 text-[12px]"><Fit w={150}>Adicionar os campos de dr...</Fit></div>
    </section>
  );
}

const fields: [string, number][] = [['Ano', 21], ['AnoMês', 44], ['AnoMesNum', 70], ['AnoNum', 47.500], ['Data', 24.500], ['Dia', 17.500], ['Dia da Semana', 79], ['Mês', 22], ['Mês Nome', 58], ['Nome do Dia', 70.500], ['Nome do Mês', 75.500], ['Semana do Ano', 84.500], ['Semestre', 49], ['SemestreNum', 75], ['Tri', 12.500], ['Trimestre', 49]];
const tables: [string, number][] = [['dCategoriaProdutos', 106], ['dIconesProdutos', 89], ['dLocalidades', 69], ['dLojas', 34]];
const TableIcon = () => <I s={12}><g stroke="#252423" strokeWidth="1.100"><rect x=".6" y=".6" width="10.800" height="10.800" rx="1.500" /><path d="M.6 3.800h10.800M.6 7.800h10.800M3.900.6v10.800M7.900.6v10.800" /></g></I>;

function DataPane() {
  return (
    <section className="flex w-[181px] shrink-0 flex-col border-l border-[#e1dfdd] bg-[#f3f2f1] text-[11.600px] text-[#484644]">
      <div className="mt-[8px] flex h-6 items-center justify-between pl-2 pr-[8px] text-[15px] font-semibold text-[#252423]"><Fit w={46}>Dados</Fit><Collapse /></div>
      <div className="ml-1 mt-[13px] flex h-[27px] w-[172px] shrink-0 items-center rounded-[2px] border border-[#605e5c] pl-[7px] text-[13px]">
        <I s={15} className="-mt-[2px]"><circle cx="9.500" cy="5.500" r="4.800" stroke="#605e5c" /><path d="m6 9-5.500 5.500" stroke="#605e5c" /></I>
        <Fit w={58} className="ml-[6px] mt-[2px]">Pesquisar</Fit>
      </div>
      <div className="mt-2 flex h-[497px] overflow-hidden">
        <div className="flex w-[168px] shrink-0 flex-col pt-[1px]">
          <div className="flex h-6 shrink-0 items-center pl-[7px]"><I s={12} h={7}><path d="m.5.5 5.500 5.500L11.500.5" stroke="#797775" /></I><span className="w-1" /><TableIcon /><Fit w={64} className="ml-[6px] mt-[3px]">dCalendario</Fit></div>
          {fields.map(([t, w]) => (
            <div key={t} className="flex h-6 shrink-0 items-center pl-[38px]"><span className="h-3 w-3 rounded-[2px] border border-[#797775]" /><Fit w={w} className="ml-[26px] mt-[3px]">{t}</Fit></div>
          ))}
          {tables.map(([t, w]) => (
            <div key={t} className="flex h-6 shrink-0 items-center pl-[9px]"><I s={7} h={12}><path d="m.5.5 5.500 5.500L.5 11.500" stroke="#797775" /></I><span className="w-[7px]" /><TableIcon /><Fit w={w} className="ml-[6px] mt-[3px]">{t}</Fit></div>
          ))}
        </div>
        <div className="h-[251px] w-2 bg-[#c8c6c4]" />
      </div>
    </section>
  );
}

function StatusBar() {
  return (
    <footer className="flex h-6 shrink-0 items-center border-t border-[#d8d6d4] bg-[#f3f2f1] text-[11.500px] text-[#484644]">
      <Fit w={71} className="ml-[5px] mt-px">Página 1 de 9</Fit>
      <div className="ml-[1077px] h-[2px] w-1 bg-[#605e5c]" />
      <I s={100} h={12} className="ml-[5px]"><path d="M0 5.500h100M50.500 3v5" stroke="#797775" /><path d="M32 0h4v11h-4z" fill="#605e5c" stroke="none" /></I>
      <I s={8} className="ml-[6px]"><path d="M0 4h8M4 0v8" stroke="#605e5c" /></I>
      <Fit w={23} className="ml-[17px] mt-px text-[#605e5c]">70%</Fit>
      <I s={16} h={13} className="ml-[15px]"><path d="M.5.500h15v12H.5zM3 5V3h2.500M10.500 3H13v2M13 8v2h-2.500M5.500 10H3V8" stroke="#605e5c" /></I>
    </footer>
  );
}

function TaskBar() {
  return (
    <footer className="flex h-[49px] shrink-0 items-center border-t border-[#000] bg-[linear-gradient(90deg,#231f26_0px,#241c23_180px,#3a171c_240px,#501414_280px,#4b1612_330px,#4a1520_385px,#3a1729_420px,#231e25_470px,#231e25_900px,#321b29_1000px,#4b132b_1140px,#4a1319_1240px,#471518_1366px)] text-[11.500px] text-white">
      <svg width="28" height="28" viewBox="0 0 28 28" className="ml-[18px] -mt-1 shrink-0">
        <defs><linearGradient id="sun" x1="0" y1="0" x2="0" y2="1"><stop offset="0" stopColor="#fbc02d" /><stop offset="1" stopColor="#f27612" /></linearGradient></defs>
        <circle cx="12.500" cy="17" r="10" fill="url(#sun)" />
        <path d="M4 13.500a4 4 0 0 1-1-7 5 5 0 0 1 8 1v6z" fill="#b5cff3" />
        <path d="M14 26a3.500 3.500 0 0 1 0-7 5 5 0 0 1 8 0 3.500 3.500 0 0 1 1 7z" fill="#a9c5f0" />
        <circle cx="20" cy="8" r="8" fill="#ff99a4" />
        <text x="17" y="12" fontSize="11" fill="#222" fontFamily="Open Sans">1</text>
      </svg>
      <div className="ml-1 flex w-[86px] flex-col pt-px leading-4"><Fit w={26} className="self-start">27°C</Fit><Fit w={86} className="self-start text-[#d0cccf]">Parc ensolarado</Fit></div>
      <svg width="23" height="23" viewBox="0 0 23 23" className="ml-[292px] shrink-0"><defs><linearGradient id="win" x1="0" y1="0" x2="1" y2="1"><stop offset="0" stopColor="#8be3ff" /><stop offset="1" stopColor="#0a8ff5" /></linearGradient></defs><path d="M0 0h11v11H0zM12 0h11v11H12zM0 12h11v11H0zM12 12h11v11H12z" fill="url(#win)" /></svg>
      <div className="ml-[13px] flex h-8 w-[220px] shrink-0 items-center rounded-full border border-[#5b5058] bg-[#433a41] text-[12.500px] text-[#d8d4d8]">
        <I s={15} className="ml-[11px]"><circle cx="6.500" cy="6.500" r="5.500" stroke="#e8e8e8" strokeWidth="1.500" /><path d="m10.500 10.500 4 4" stroke="#e8e8e8" strokeWidth="1.700" /></I>
        <Fit w={58} className="ml-[10px] mt-px">Pesquisar</Fit>
        <svg width="46" height="26" viewBox="0 0 46 26" className="ml-[74px] shrink-0">
          <path d="M0 24q10-4 22-3t24-2q-2 5-10 5-12 2-22 1-9 1-14-1z" fill="#5ec24f" />
          <path d="M3 12h5v10H3zM13 9h5v13h-5zM32 9h4v12h-4zM39 13h5v8h-5z" fill="#7c8fae" />
          <path d="M19 3h5v19h-5zM26 5h5v17h-5zM36 11h3v11h-3z" fill="#5db8e8" />
          <path d="M10.500 0h1v6l1.500 2-1 2v12h-3V10L8 8l2.500-2z" fill="#c989b0" />
          <path d="M0 16h3v7H0zM24 14h2v8h-2zM36 17h3v4h-3z" fill="#d8907a" />
          <path d="M10 22q8-2 14 0t12-1" fill="none" stroke="#3b9bd6" strokeWidth="1.500" />
        </svg>
      </div>
      <svg width="24" height="24" viewBox="0 0 24 24" className="ml-[13px] shrink-0">
        <defs><linearGradient id="cop" x1="0" y1="0" x2="0" y2="1"><stop offset="0" stopColor="#2473e8" /><stop offset=".6" stopColor="#2db79c" /><stop offset="1" stopColor="#e5c83a" /></linearGradient><linearGradient id="cop2" x1="0" y1="0" x2="0" y2="1"><stop offset="0" stopColor="#a45cf0" /><stop offset="1" stopColor="#f0717c" /></linearGradient></defs>
        <path d="M6 1h8q2 0 3 4h-3q-2 0-3 4l-2 8H3q-4 0-2-6l2-7q1-3 3-3z" fill="url(#cop)" />
        <path d="M15 5h4q4 0 3 5l-2 8q-1 4-4 4H9q3-1 4-6z" fill="url(#cop2)" />
        <rect x="5" y="15" width="18" height="9" rx="2" fill="#ffc20e" /><text x="6.500" y="22.500" fontSize="7.500" fontWeight="700" fill="#222" fontFamily="Open Sans">PRE</text>
      </svg>
      <svg width="24" height="22" viewBox="0 0 24 22" className="ml-[19px] shrink-0"><path d="M0 6h18v16H0z" fill="#77757a" /><path d="M6 0h18v16H6z" fill="#f2f2f2" /><path d="M6 6h12v10H6z" fill="#b4b2b5" /></svg>
      <svg width="24" height="24" viewBox="0 0 24 24" className="ml-[20px] shrink-0"><circle cx="14" cy="4" r="3.500" fill="#7b83eb" /><circle cx="21" cy="5" r="2.500" fill="#5059c9" /><path d="M17 9h7v7q0 4-5 4z" fill="#5059c9" /><path d="M7 9h13v9q-1 6-7 6-5 0-6-5z" fill="#7b83eb" /><path d="M0 4h13v15H0z" fill="#f4f4f8" /><path d="M3 8h7M6.500 8v8" stroke="#4b53bc" strokeWidth="2" /></svg>
      <svg width="24" height="22" viewBox="0 0 24 22" className="ml-[20px] shrink-0"><path d="M0 1q0-1 1-1h7l3 3h12q1 0 1 1v10H0z" fill="#e0a012" /><path d="M0 5h24v15q0 1-1 1H1q-1 0-1-1z" fill="#ffd04c" /><path d="M5 21v-5q0-2 2-2h10q2 0 2 2v5z" fill="#1277c9" /><path d="M9 18h6" stroke="#0a4f90" strokeWidth="1.500" /></svg>
      <div className="ml-[12px] flex h-10 w-[39px] shrink-0 flex-col items-center rounded bg-[#3a343b] pt-[7px]">
        <svg width="24" height="25" viewBox="0 0 24 24" className="shrink-0"><defs><linearGradient id="edg" x1="0" y1="0" x2="1" y2="0"><stop offset="0" stopColor="#2aa8ea" /><stop offset="1" stopColor="#64d64a" /></linearGradient></defs><circle cx="12" cy="12" r="11.500" fill="#1565b8" /><path d="M.5 12C1 5 6 .5 12 .5c7 0 11.500 5 11.500 9.500 0 4-3 6-6 6-2 0-3.500-1-2-3 1-3-1-5.500-4-5.500C7 7.500 2 9 .5 12z" fill="url(#edg)" /><path d="M13 9.500c-3 2-2 8 4 8 2.500 0 5-1 6-2.500-.5 2-1.500 3.500-3 5-7 1-12-6-7-10.500z" fill="#3a343b" /><path d="M.5 12q2-5 8-5 4 0 5 3-5-2-6 4 0 6 6 9.500Q1 23 .5 12z" fill="#1b8be0" /></svg>
        <div className="mt-[3px] h-[3px] w-4 shrink-0 rounded-full bg-[#fa7f63]" />
      </div>
      <div className="ml-[15px] mt-[5px] flex shrink-0 flex-col items-center">
        <svg width="20" height="24" viewBox="0 0 20 24"><path d="M10 0h9q1 0 1 1v22q0 1-1 1h-9z" fill="#d99b0a" /><path d="M5 6h9q1 0 1 1v17H5z" fill="#f1c232" /><path d="M0 12h8q1 0 1 1v11H1q-1 0-1-1z" fill="#fbe083" /></svg>
        <div className="mt-[4px] h-[3px] w-[6px] rounded-full bg-[#9a969a]" />
      </div>
      <I s={12} h={7} className="ml-[168px]"><path d="m1 6 5-5 5 5" stroke="#fff" strokeWidth="1.500" /></I>
      <div className="ml-5 flex w-[24px] shrink-0 flex-col items-center pt-[3px] leading-4"><Fit w={23}>POR</Fit><Fit w={19}>PTB</Fit></div>
      <I s={14} h={12} className="ml-[19px]"><g stroke="#fff" strokeWidth="1.200"><path d="M.8 4.500Q7-1.500 13.200 4.500" /><path d="M2.800 6.800q4.200-4 8.400 0M4.800 9q2.200-2 4.400 0" /><circle cx="7" cy="10.500" r=".8" fill="#fff" /></g></I>
      <I s={15} h={13} className="ml-[9px]"><g stroke="#fff"><path d="M.6 4.500h2.500L7 1v11L3.100 8.500H.6zM9 4.500q1.500 2 0 4M11 2.500q3 4 0 8" /><path d="M13 1q3 5.500 0 11" stroke="#a09098" /></g></I>
      <I s={16} h={13} className="ml-[9px]"><path d="M4 3h9.500v8h-12V8" stroke="#fff" strokeWidth="1.200" /><path d="M14 5.500h1.500v3H14zM5 5h7v4.500H3.500z" fill="#fff" stroke="none" /><path d="M4 0 .5 5H3L2 9l4-5H3.500z" fill="#fff" stroke="none" /></I>
      <div className="ml-[17px] flex w-[62px] shrink-0 flex-col items-end pt-px leading-4"><Fit w={29}>12:14</Fit><Fit w={62}>30/11/2023</Fit></div>
      <I s={14} h={16} className="ml-[8px]"><path d="M7 .5c3 0 4.800 2.200 4.800 5v3.500l1.700 3.500H.5L2.200 9V5.500C2.200 2.700 4 .5 7 .5zM5 13.500h4q-.5 2-2 2t-2-2z" fill="#ffa07a" stroke="none" /></I>
    </footer>
  );
}

export default function App() {
  return (
    <div className="flex h-[768px] w-[1366px] flex-col overflow-hidden bg-white font-['Open_Sans','Noto_Sans',sans-serif] leading-normal [text-rendering:geometricPrecision]">
      <TitleBar />
      <Menu />
      <Ribbon />
      <main className="flex h-[585px] shrink-0">
        <NavRail />
        <div className="flex w-[963px] shrink-0 flex-col">
          <Canvas />
          <PageTabs />
        </div>
        <VisualPane />
        <DataPane />
      </main>
      <StatusBar />
      <TaskBar />
    </div>
  );
}
